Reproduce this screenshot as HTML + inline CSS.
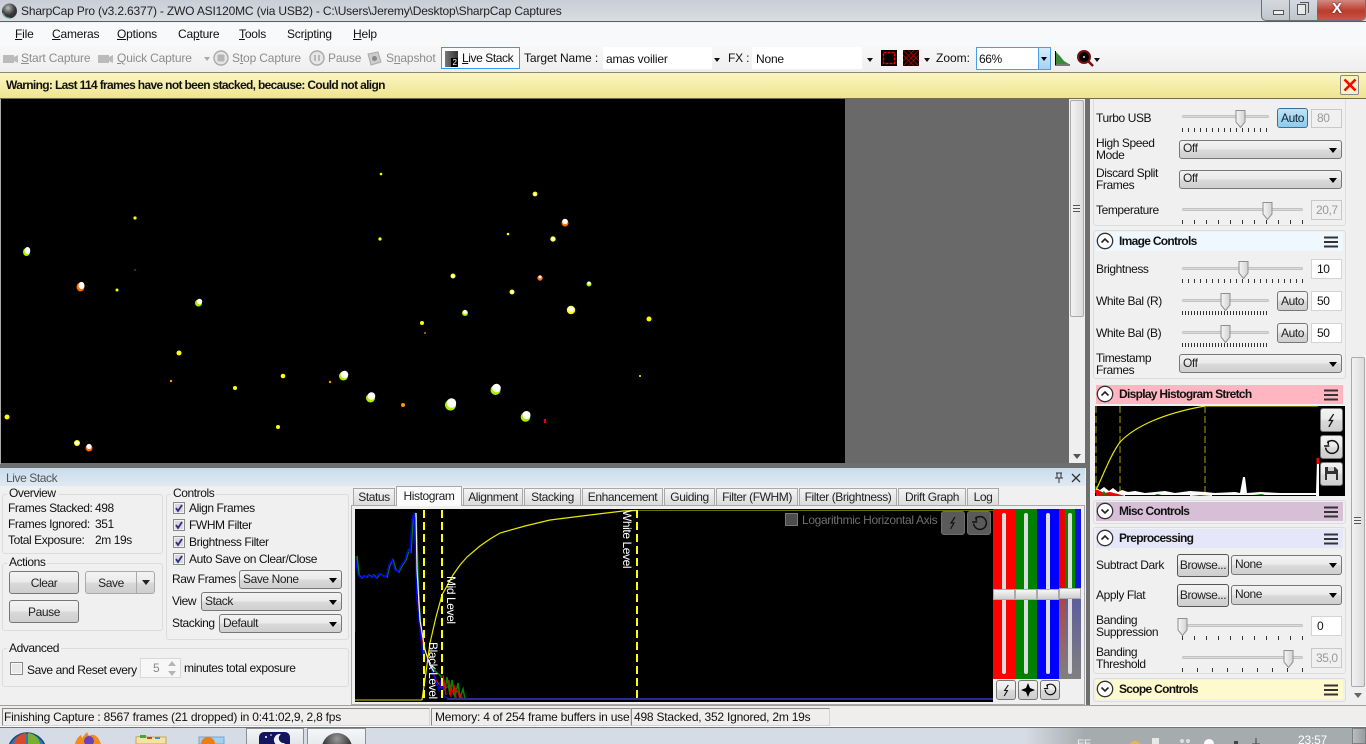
<!DOCTYPE html>
<html><head><meta charset="utf-8"><title>SharpCap Pro</title>
<style>
html,body{margin:0;padding:0;width:1366px;height:744px;overflow:hidden;background:#f0f0f0}
body{position:relative;font:12px/14px "Liberation Sans",Arial,sans-serif;color:#111;letter-spacing:-.42px}
div,span,svg{position:absolute;box-sizing:border-box}
.t{white-space:nowrap;line-height:14px}
.w{letter-spacing:-.15px}
.s{letter-spacing:-.2px}
.g{color:#8c8c8c}
u{text-decoration:underline}
.b{font-weight:bold;letter-spacing:-.7px}
.gb{border:1px solid #dcdcdc;border-radius:3px}
.btn{border:1px solid #777;border-radius:3px;background:linear-gradient(#f3f3f3 0,#ebebeb 45%,#d8d8d8 55%,#cfcfcf 100%);text-align:center;white-space:nowrap;color:#222}
.cb{border:1px solid #777;border-radius:3px;background:linear-gradient(#f3f3f3 0,#ebebeb 45%,#d9d9d9 55%,#cfcfcf 100%);white-space:nowrap;padding-left:3px;color:#222}
.cb:after{content:"";position:absolute;right:4px;top:50%;margin-top:-2px;border:4px solid transparent;border-top:5px solid #000;border-bottom:0}
.box{background:#fff;border:1px solid #d4d4d4;padding-left:5px;white-space:nowrap}
.dis{color:#999;background:#f0f0f0;border-color:#c8c8c8}
.track{height:3px;background:#d8dbd8;border:1px solid #c2c4c2;border-radius:2px}
.ticks{height:4px;background:repeating-linear-gradient(90deg,#333 0 1px,transparent 1px 6px)}
.hd{height:19px}
.chk{width:12px;height:12px;border:1px solid #8a8a8a;background:#d9d9d9;box-shadow:inset 0 0 0 1px #f2f2f2}
.tab{top:488px;height:17px;border:1px solid #a8a8a8;border-bottom:0;background:linear-gradient(#f4f4f4,#dcdcdc);text-align:center;white-space:nowrap;line-height:17px;color:#222}
</style></head><body>
<svg width="0" height="0" style="left:0;top:0"><defs>
<linearGradient id="tg" x1="0" y1="0" x2="1" y2="0"><stop offset="0" stop-color="#f6f6f6"/><stop offset="1" stop-color="#d2d2d2"/></linearGradient>
<symbol id="thumb" viewBox="0 0 11 18"><path d="M1 .5H10V12L5.500 17.500 1 12Z" fill="url(#tg)" stroke="#8f8f8f"/></symbol>
<symbol id="cc" viewBox="0 0 18 18"><circle cx="9" cy="9" r="7.700" fill="#fff" stroke="#333" stroke-width="1.300"/><path d="M5.500 10.500L9 7l3.500 3.500" fill="none" stroke="#222" stroke-width="1.600"/></symbol>
<symbol id="cd" viewBox="0 0 18 18"><circle cx="9" cy="9" r="7.700" fill="#fff" stroke="#333" stroke-width="1.300"/><path d="M5.500 7.500L9 11l3.500-3.500" fill="none" stroke="#222" stroke-width="1.600"/></symbol>
<symbol id="menu" viewBox="0 0 14 12"><path d="M0 1.500H14M0 6H14M0 10.500H14" stroke="#333" stroke-width="2"/></symbol>
<symbol id="undo" viewBox="0 0 16 16"><path d="M4 4.500A6 6 0 1 1 2.500 9" fill="none" stroke="#111" stroke-width="1.400"/><path d="M1 7.500H6M5 2.500V6.500" stroke="#111" stroke-width="1.400" fill="none"/></symbol>
<symbol id="bolt" viewBox="0 0 12 14"><path d="M8 1L4 7H7L3.500 13" fill="none" stroke="#111" stroke-width="1.200"/></symbol>
</defs></svg>

<!-- Title bar -->
<div style="left:0;top:0;width:1366px;height:22px;background:linear-gradient(#c9ced6,#d8dce3);border-bottom:1px solid #5d5f63"></div>
<svg style="left:1px;top:2px" width="17" height="18"><defs><radialGradient id="ball" cx=".4" cy=".3"><stop offset="0" stop-color="#bdbdbd"/><stop offset=".7" stop-color="#555"/><stop offset="1" stop-color="#333"/></radialGradient></defs><circle cx="8.500" cy="9" r="7.500" fill="url(#ball)"/><path d="M2 11a7 7 0 0 0 7 5" stroke="#5a9" fill="none"/></svg>
<div class="t" style="left:21px;top:4px;color:#222;letter-spacing:-.18px">SharpCap Pro (v3.2.6377) - ZWO ASI120MC (via USB2) - C:\Users\Jeremy\Desktop\SharpCap Captures</div>
<div style="left:1261px;top:0;width:105px;height:21px;border:1px solid #6b6f75;border-top:0;border-radius:0 0 5px 5px;background:linear-gradient(#d5d9df,#c0c5cc);overflow:hidden">
 <div style="left:27px;top:0;width:1px;height:20px;background:#777"></div>
 <div style="left:55px;top:0;width:48px;height:20px;background:linear-gradient(#d18a80,#bb3b2c 55%,#c9574a)"></div>
 <div style="left:11px;top:10px;width:11px;height:5px;background:#eee;border:1px solid #555"></div>
 <div style="left:35px;top:4px;width:9px;height:11px;background:#e8e8e8;border:1px solid #555"></div>
 <div style="left:38px;top:2px;width:9px;height:11px;border:1px solid #555;border-left:0;border-bottom:0"></div>
 <div class="t" style="left:70px;top:2px;font-size:15px;font-weight:bold;color:#fff;text-shadow:0 0 2px #622">X</div>
</div>

<!-- Menu -->
<div style="left:0;top:23px;width:1366px;height:23px;background:#f8f9fa"></div>
<div class="t s" style="left:15px;top:27px"><u>F</u>ile</div>
<div class="t s" style="left:52px;top:27px"><u>C</u>ameras</div>
<div class="t s" style="left:117px;top:27px"><u>O</u>ptions</div>
<div class="t s" style="left:178px;top:27px">Ca<u>p</u>ture</div>
<div class="t s" style="left:239px;top:27px"><u>T</u>ools</div>
<div class="t s" style="left:287px;top:27px">Scr<u>i</u>pting</div>
<div class="t s" style="left:353px;top:27px"><u>H</u>elp</div>

<!-- Toolbar -->
<div style="left:0;top:46px;width:1366px;height:26px;background:linear-gradient(#f8f8f8,#eeeeee)"></div>
<svg style="left:3px;top:52px" width="90" height="13"><path d="M0 3h11v8H0zM11 5l4-2v8l-4-2z" fill="#bbb"/></svg>
<div class="t g w" style="left:21px;top:51px"><u>S</u>tart Capture</div>
<svg style="left:98px;top:52px" width="16" height="13"><path d="M0 3h11v8H0zM11 5l4-2v8l-4-2z" fill="#bbb"/></svg>
<div class="t g w" style="left:117px;top:51px"><u>Q</u>uick Capture</div>
<div style="left:204px;top:57px;border:3px solid transparent;border-top:4px solid #aaa"></div>
<svg style="left:213px;top:50px" width="16" height="16"><circle cx="8" cy="8" r="7" fill="#e6e6e6" stroke="#aaa" stroke-width="1.400"/><rect x="4.500" y="4.500" width="7" height="7" rx="1" fill="#b5b5b5"/></svg>
<div class="t g w" style="left:232px;top:51px">S<u>t</u>op Capture</div>
<svg style="left:309px;top:50px" width="16" height="16"><circle cx="8" cy="8" r="7" fill="#e6e6e6" stroke="#aaa" stroke-width="1.400"/><path d="M6 5v6M10 5v6" stroke="#aaa" stroke-width="1.500"/></svg>
<div class="t g w" style="left:328px;top:51px">Pause</div>
<svg style="left:367px;top:51px" width="15" height="15"><path d="M1 3l10-2 3 10-10 3z" fill="#ccc" stroke="#aaa"/><circle cx="7.500" cy="7.500" r="2.500" fill="#888"/></svg>
<div class="t g w" style="left:386px;top:51px">S<u>n</u>apshot</div>
<div style="left:441px;top:47px;width:79px;height:22px;border:1px solid #3399ff;background:#fbfbfb"></div>
<div style="left:445px;top:51px;width:13px;height:16px;background:linear-gradient(90deg,#777,#333)"></div>
<div style="left:451px;top:58px;width:7px;height:9px;background:#000;color:#fff;font-size:8px;line-height:9px;text-align:center">2</div>
<div class="t" style="left:462px;top:51px"><u>L</u>ive Stack</div>
<div class="t" style="left:524px;top:51px;letter-spacing:-.1px">Target Name :</div>
<div style="left:603px;top:47px;width:109px;height:22px;background:#fff"></div>
<div class="t s" style="left:606px;top:52px">amas voilier</div>
<div style="left:714px;top:58px;border:3px solid transparent;border-top:4px solid #111"></div>
<div class="t s" style="left:728px;top:51px">FX :</div>
<div style="left:752px;top:47px;width:110px;height:22px;background:#fff"></div>
<div class="t s" style="left:756px;top:52px">None</div>
<div style="left:867px;top:58px;border:3px solid transparent;border-top:4px solid #111"></div>
<svg style="left:881px;top:50px" width="16" height="16"><rect width="16" height="16"/><rect x="2.500" y="2.500" width="11" height="11" fill="none" stroke="#e00" stroke-width="1.500" stroke-dasharray="3 1"/></svg>
<svg style="left:903px;top:50px" width="16" height="16"><rect width="16" height="16"/><path d="M0 0L16 16M16 0L0 16M5 0L16 11M11 0L0 11M0 5L11 16M16 5L5 16" stroke="#900" fill="none"/></svg>
<div style="left:924px;top:58px;border:3px solid transparent;border-top:4px solid #111"></div>
<div class="t" style="left:936px;top:51px;letter-spacing:0">Zoom:</div>
<div style="left:976px;top:47px;width:75px;height:23px;border:1px solid #4a9de8;background:#fff"></div>
<div class="t" style="left:979px;top:52px">66%</div>
<div style="left:1038px;top:48px;width:12px;height:21px;background:linear-gradient(#d7ecfb,#a5d2f2);border-left:1px solid #4a9de8"></div>
<div style="left:1041px;top:57px;border:3px solid transparent;border-top:4px solid #000"></div>
<svg style="left:1055px;top:50px" width="16" height="16"><path d="M1 14V2L5 6 9 11 14 14Z" fill="#3b8a3b"/><path d="M.500 1V15H15" stroke="#000" fill="none"/></svg>
<svg style="left:1077px;top:50px" width="17" height="17"><circle cx="7" cy="7" r="6" fill="#000" stroke="#7d0f10" stroke-width="2"/><circle cx="7" cy="7" r="1" fill="#ddd"/><path d="M11 11l5 5" stroke="#7d0f10" stroke-width="2.500"/></svg>
<div style="left:1094px;top:58px;border:3px solid transparent;border-top:4px solid #111"></div>

<!-- Warning -->
<div style="left:0;top:72px;width:1366px;height:27px;background:linear-gradient(#faf5c2,#efe58f);border-top:1px solid #8a8a70;border-bottom:1px solid #6e6e55"></div>
<div class="t" style="left:6px;top:78px;font-weight:bold;letter-spacing:-.66px;color:#111">Warning: Last 114 frames have not been stacked, because: Could not align</div>
<div style="left:1340px;top:75px;width:19px;height:20px;border:1px solid #888;border-radius:2px;background:#f7f2c4"></div>
<svg style="left:1343px;top:78px" width="14" height="14"><path d="M1.500 1.500L12.500 12.500M12.500 1.500L1.500 12.500" stroke="#f00" stroke-width="2.600"/></svg>

<!-- Image area -->
<div style="left:0;top:99px;width:1069px;height:365px;background:#696969"></div>
<svg style="left:1px;top:99px;background:#000" width="844" height="364" viewBox="1 99 844 364">
<g fill="#a8f000"><ellipse cx="26.500" cy="252" rx="3.500" ry="4"/><ellipse cx="198.500" cy="303" rx="3.500" ry="3.500"/><circle cx="343.500" cy="376" r="4.500"/><circle cx="370.500" cy="398" r="4.500"/><circle cx="450.500" cy="405" r="5.500"/><circle cx="495.500" cy="390" r="5"/><circle cx="525.500" cy="417" r="4.800"/><circle cx="465" cy="313" r="3"/><circle cx="589" cy="284" r="2.500"/></g>
<g fill="#ff6a00"><ellipse cx="80.500" cy="287" rx="4" ry="4.500"/><circle cx="89" cy="448" r="3.500"/><circle cx="565" cy="223" r="3.500"/><circle cx="540" cy="278" r="2.700"/></g>
<g fill="#ff0"><circle cx="7" cy="417" r="2.500"/><circle cx="77" cy="443" r="3"/><circle cx="179" cy="353" r="2.500"/><circle cx="283" cy="376" r="2.300"/><circle cx="235" cy="388" r="2"/><circle cx="278" cy="427" r="2"/><circle cx="553" cy="239" r="2.700"/><circle cx="535" cy="194" r="2.400"/><circle cx="453" cy="276" r="2.500"/><circle cx="512" cy="292" r="2.500"/><circle cx="571" cy="310" r="4.200"/><circle cx="649" cy="319" r="2.500"/><circle cx="117" cy="290" r="1.500"/><circle cx="508" cy="234" r="1.300"/><circle cx="135" cy="218" r="1.600"/><circle cx="381" cy="174" r="1.300"/><circle cx="380" cy="239" r="1.600"/><circle cx="422" cy="323" r="2"/><circle cx="640" cy="376" r="1"/></g>
<g fill="#fff"><ellipse cx="27.500" cy="250.500" rx="2.800" ry="3.500"/><ellipse cx="81.500" cy="285.500" rx="3" ry="3.600"/><circle cx="199.500" cy="301.500" r="2.700"/><circle cx="344.500" cy="374.500" r="3.800"/><circle cx="371.500" cy="396" r="3.800"/><circle cx="451.500" cy="403" r="4.700"/><circle cx="496.500" cy="388" r="4.300"/><circle cx="526.500" cy="415" r="4"/><circle cx="89" cy="446.500" r="2.600"/><circle cx="77" cy="443" r="1.900"/><circle cx="565" cy="221.500" r="2.800"/><circle cx="465" cy="312" r="2.100"/><circle cx="589" cy="283" r="1.500"/><circle cx="453" cy="276" r="1.500"/><circle cx="512" cy="292" r="1.500"/><circle cx="553" cy="239" r="1.700"/><circle cx="535" cy="194" r="1.300"/><circle cx="540" cy="277" r="1.500"/><circle cx="571" cy="309" r="2.800"/></g>
<g fill="#f90"><circle cx="171" cy="381" r="1.200"/><circle cx="330" cy="382" r="1.200"/><circle cx="403" cy="405" r="2"/><circle cx="425" cy="333" r=".9"/><circle cx="135" cy="270" r=".6"/></g>
<rect x="544" y="419" width="2" height="4" fill="#e00"/>
</svg>
<div style="left:1069px;top:99px;width:16px;height:365px;background:#efefef"></div>
<div style="left:1070px;top:100px;width:14px;height:217px;background:linear-gradient(90deg,#f2f2f2,#dcdcdc);border:1px solid #aaa;border-radius:2px"></div>
<div style="left:1073px;top:205px;width:7px;height:7px;background:repeating-linear-gradient(#555 0 1px,#eee 1px 3px)"></div>
<div style="left:1073px;top:454px;border:4px solid transparent;border-top:5px solid #555"></div>
<div style="left:0;top:463px;width:1086px;height:5px;background:#6e6e6e"></div>
<div style="left:1085px;top:99px;width:5px;height:608px;background:#6e6e6e"></div>
<div style="left:0;top:99px;width:1px;height:365px;background:#aaa"></div>

<!-- Live stack panel -->
<div style="left:0;top:468px;width:1086px;height:238px;background:#f0f0f0"></div>
<div style="left:0;top:468px;width:1085px;height:18px;background:linear-gradient(#c9dcec,#dfe9f3)"></div>
<div class="t" style="left:6px;top:471px;color:#555">Live Stack</div>
<svg style="left:1054px;top:472px" width="10" height="11"><path d="M2 1h6M3 1v5h4V1M1 6h8M5 6v5" stroke="#333" fill="none"/></svg>
<svg style="left:1071px;top:473px" width="10" height="10"><path d="M1 1l8 8M9 1L1 9" stroke="#333" stroke-width="1.300"/></svg>

<div class="gb" style="left:2px;top:494px;width:161px;height:60px"></div>
<div class="t" style="left:7px;top:486px;background:#f0f0f0;padding:0 2px">Overview</div>
<div class="t" style="left:8px;top:501px">Frames Stacked:</div><div class="t" style="left:95px;top:501px">498</div>
<div class="t" style="left:8px;top:517px">Frames Ignored:</div><div class="t" style="left:95px;top:517px">351</div>
<div class="t" style="left:8px;top:533px">Total Exposure:</div><div class="t" style="left:95px;top:533px">2m 19s</div>

<div class="gb" style="left:2px;top:563px;width:161px;height:68px"></div>
<div class="t" style="left:7px;top:555px;background:#f0f0f0;padding:0 2px">Actions</div>
<div class="btn" style="left:9px;top:571px;width:70px;height:23px;line-height:22px">Clear</div>
<div class="btn" style="left:85px;top:571px;width:70px;height:23px;line-height:22px;border-color:#aaa;padding-right:18px">Save</div>
<div style="left:136px;top:572px;width:1px;height:21px;background:#aaa"></div>
<div style="left:142px;top:580px;border:4px solid transparent;border-top:5px solid #222;border-bottom:0"></div>
<div class="btn" style="left:9px;top:600px;width:70px;height:23px;line-height:22px">Pause</div>

<div class="gb" style="left:166px;top:494px;width:183px;height:146px"></div>
<div class="t" style="left:171px;top:486px;background:#f0f0f0;padding:0 2px">Controls</div>
<div class="chk" style="left:173px;top:502px"></div><div class="chk" style="left:173px;top:519px"></div><div class="chk" style="left:173px;top:536px"></div><div class="chk" style="left:173px;top:553px"></div>
<svg style="left:173px;top:502px" width="12" height="63"><g fill="none" stroke="#2d2d8c" stroke-width="1.800"><path d="M3 6l2 3 4-6"/><path d="M3 23l2 3 4-6"/><path d="M3 40l2 3 4-6"/><path d="M3 57l2 3 4-6"/></g></svg>
<div class="t" style="left:189px;top:501px">Align Frames</div>
<div class="t" style="left:189px;top:518px">FWHM Filter</div>
<div class="t" style="left:189px;top:535px">Brightness Filter</div>
<div class="t" style="left:189px;top:552px">Auto Save on Clear/Close</div>
<div class="t" style="left:172px;top:572px">Raw Frames</div>
<div class="cb" style="left:239px;top:570px;width:103px;height:19px;line-height:17px">Save None</div>
<div class="t" style="left:172px;top:594px">View</div>
<div class="cb" style="left:201px;top:592px;width:141px;height:19px;line-height:17px">Stack</div>
<div class="t" style="left:172px;top:616px">Stacking</div>
<div class="cb" style="left:219px;top:614px;width:123px;height:19px;line-height:17px">Default</div>

<div class="gb" style="left:2px;top:648px;width:347px;height:39px"></div>
<div class="t" style="left:7px;top:641px;background:#f0f0f0;padding:0 2px">Advanced</div>
<div style="left:10px;top:662px;width:13px;height:13px;border:1px solid #8a8a8a;background:#e8e8e8;box-shadow:inset 0 0 0 1px #f8f8f8"></div>
<div class="t" style="left:27px;top:663px">Save and Reset every</div>
<div style="left:140px;top:658px;width:41px;height:20px;background:#f7f7f7;border:1px solid #d8d8d8"></div>
<div class="t" style="left:153px;top:661px;color:#888">5</div>
<div style="left:168px;top:661px;border:4px solid transparent;border-bottom:5px solid #b5b5b5;border-top:0"></div>
<div style="left:168px;top:671px;border:4px solid transparent;border-top:5px solid #b5b5b5;border-bottom:0"></div>
<div class="t" style="left:184px;top:661px">minutes total exposure</div>

<!-- Tabs -->
<div style="left:351px;top:505px;width:734px;height:200px;border:1px solid #a8a8a8;background:#f0f0f0"></div>
<div class="tab" style="left:353px;width:42px">Status</div>
<div class="tab" style="left:463px;width:60px">Alignment</div>
<div class="tab" style="left:524px;width:57px">Stacking</div>
<div class="tab" style="left:582px;width:81px">Enhancement</div>
<div class="tab" style="left:664px;width:51px">Guiding</div>
<div class="tab" style="left:716px;width:82px">Filter (FWHM)</div>
<div class="tab" style="left:799px;width:98px">Filter (Brightness)</div>
<div class="tab" style="left:898px;width:68px">Drift Graph</div>
<div class="tab" style="left:967px;width:32px">Log</div>
<div class="tab" style="left:396px;top:486px;width:66px;height:20px;background:#fbfbfb;border-bottom:0;line-height:19px;z-index:2">Histogram</div>

<!-- Histogram -->
<svg style="left:355px;top:509px;background:#000" width="638" height="193" viewBox="355 509 638 193">
<path d="M355 700H422" stroke="#8f8f00" stroke-width="1.500" fill="none"/>
<path d="M637 510.500H993" stroke="#6e6e00" fill="none"/>
<path d="M356 556L358 575 361 578 363 576 366 577 368 575 371 577 373 575 376 578 379 574 383 576 386 577 389 565 392 560 395 570 398 572 401 566 405 560 408 550 410 552 412 520 415 513 416 540 418 600 420 630 423 655" stroke="#080" stroke-width="1.500" fill="none" transform="translate(1,0)"/>
<path d="M418 600L422 640 430 665 436 680 443 690 450 685 454 695 456 699" stroke="#e00" stroke-width="1.200" fill="none"/>
<path d="M430 665L436 672 441 676 445 690 447 677 450 695 452 680 455 697 458 683 460 698 463 689 465 699" stroke="#080" stroke-width="1.500" fill="none"/>
<path d="M443 675L446 695M449 680L451 697M454 685L456 698M458 692L460 699M455 688L463 699" stroke="#e00" stroke-width="1.300"/>
<path d="M355 632V556L358 575 361 578 363 576 366 577 368 575 371 577 373 575 376 578 379 574 383 576 386 577 389 565 392 560 395 570 398 572 401 566 405 560 408 550 410 552 412 520 414 513 415 540 417 600 420 630 423 655 428 660 431 668 436 682 439 690 441 680 444 697 448 698" stroke="#0000f0" stroke-width="1.500" fill="none"/>
<path d="M416 513L417 570 420 620 425 650 430 665 434 672" stroke="#eee" stroke-width="1.200" fill="none"/>
<path d="M447 699H993" stroke="#2b2b8f" stroke-width="2"/>
<path d="M422 700L426 672 430 643 436 617 442 595 453 575 460 565 467 557 480 546 490 539 500 533 525 526 550 520 590 515 623 511 637 510.500" stroke="#e8e800" stroke-width="1.200" fill="none"/>
<g stroke="#ff0" stroke-width="2" stroke-dasharray="8 4"><path d="M424 510V700"/><path d="M442 510V700"/><path d="M637 510V700"/></g>
</svg>
<div class="t" style="left:444px;top:576px;writing-mode:vertical-rl;color:#fff;line-height:14px">Mid Level</div>
<div class="t" style="left:426px;top:642px;writing-mode:vertical-rl;color:#fff;line-height:14px">Black Level</div>
<div class="t" style="left:620px;top:510px;writing-mode:vertical-rl;color:#fff;line-height:14px">White Level</div>
<div style="left:785px;top:513px;width:13px;height:13px;background:#4c4c4c;border:1px solid #777"></div>
<div class="t" style="left:802px;top:513px;color:#6e6e6e;letter-spacing:-.35px">Logarithmic Horizontal Axis</div>
<div style="left:941px;top:511px;width:24px;height:24px;background:#5a5a5a;border:1px solid #6d6d6d;border-radius:3px"></div>
<svg style="left:947px;top:516px" width="12" height="14"><use href="#bolt"/></svg>
<div style="left:967px;top:511px;width:24px;height:24px;background:#5a5a5a;border:1px solid #6d6d6d;border-radius:3px"></div>
<svg style="left:971px;top:514px" width="17" height="17"><use href="#undo"/></svg>

<!-- Colour sliders -->
<div style="left:993px;top:509px;width:22px;height:170px;background:#f00"></div>
<div style="left:1015px;top:509px;width:22px;height:170px;background:#008000"></div>
<div style="left:1037px;top:509px;width:22px;height:170px;background:#00f"></div>
<div style="left:1059px;top:509px;width:22px;height:81px;background:linear-gradient(90deg,#e00 0 6px,#080 6px 16px,#11d 16px)"></div>
<div style="left:1059px;top:590px;width:22px;height:89px;background:linear-gradient(#5a5aa0,#808080)"></div>
<div style="left:1059px;top:590px;width:6px;height:89px;background:linear-gradient(#b04040,#808080)"></div>
<div style="left:1002px;top:513px;width:4px;height:161px;background:#ddd;border-radius:2px"></div>
<div style="left:1024px;top:513px;width:4px;height:161px;background:#ddd;border-radius:2px"></div>
<div style="left:1046px;top:513px;width:4px;height:161px;background:#ddd;border-radius:2px"></div>
<div style="left:1068px;top:513px;width:4px;height:161px;background:#ddd;border-radius:2px"></div>
<div style="left:993px;top:589px;width:22px;height:11px;background:linear-gradient(#f7f7f7,#cfcfcf);border:1px solid #aaa"></div>
<div style="left:1015px;top:589px;width:22px;height:11px;background:linear-gradient(#f7f7f7,#cfcfcf);border:1px solid #aaa"></div>
<div style="left:1037px;top:589px;width:22px;height:11px;background:linear-gradient(#f7f7f7,#cfcfcf);border:1px solid #aaa"></div>
<div style="left:1059px;top:588px;width:22px;height:11px;background:linear-gradient(#f7f7f7,#cfcfcf);border:1px solid #aaa"></div>
<div class="btn" style="left:996px;top:680px;width:20px;height:20px"></div>
<svg style="left:1001px;top:684px" width="11" height="13"><use href="#bolt"/></svg>
<div class="btn" style="left:1018px;top:680px;width:20px;height:20px"></div>
<svg style="left:1021px;top:683px" width="14" height="14"><path d="M7 0L9 5 14 7 9 9 7 14 5 9 0 7 5 5Z"/></svg>
<div class="btn" style="left:1040px;top:680px;width:20px;height:20px"></div>
<svg style="left:1043px;top:682px" width="14" height="14"><use href="#undo"/></svg>

<!-- Right panel -->
<div style="left:1090px;top:99px;width:260px;height:606px;background:#f0f0f0"></div>
<div class="gb" style="left:1093px;top:99px;width:253px;height:127px;border-radius:0 0 3px 3px;border-top:0"></div>
<div class="t" style="left:1096px;top:111px">Turbo USB</div>
<div class="track" style="left:1182px;top:115px;width:87px"></div>
<svg style="left:1235px;top:110px" width="11" height="18"><use href="#thumb"/></svg>
<div class="ticks" style="left:1182px;top:128px;width:87px"></div>
<div style="left:1277px;top:108px;width:31px;height:20px;border:1px solid #3c6f92;border-radius:3px;background:linear-gradient(#bfe3f7,#8ccbee);text-align:center;line-height:18px;color:#123">Auto</div>
<div class="box dis" style="left:1311px;top:109px;width:31px;height:19px;line-height:17px">80</div>
<div class="t" style="left:1096px;top:137px;line-height:12px;white-space:normal;width:70px">High Speed Mode</div>
<div class="cb" style="left:1179px;top:140px;width:163px;height:19px;line-height:15px">Off</div>
<div class="t" style="left:1096px;top:167px;line-height:12px;white-space:normal;width:70px">Discard Split Frames</div>
<div class="cb" style="left:1179px;top:170px;width:163px;height:19px;line-height:15px">Off</div>
<div class="t" style="left:1096px;top:203px">Temperature</div>
<div class="track" style="left:1182px;top:208px;width:121px"></div>
<svg style="left:1262px;top:202px" width="11" height="18"><use href="#thumb"/></svg>
<div class="ticks" style="left:1182px;top:220px;width:121px;background:repeating-linear-gradient(90deg,#333 0 1px,transparent 1px 12px)"></div>
<div class="box dis" style="left:1311px;top:200px;width:31px;height:20px;line-height:18px;padding-left:4px">20,7</div>

<div class="gb" style="left:1093px;top:230px;width:253px;height:149px"></div>
<div class="hd" style="left:1096px;top:232px;width:247px;background:#f0f8ff"></div>
<svg style="left:1096px;top:232px" width="18" height="18"><use href="#cc"/></svg>
<div class="t b" style="left:1119px;top:234px">Image Controls</div>
<svg style="left:1324px;top:236px" width="14" height="12"><use href="#menu"/></svg>
<div class="t" style="left:1096px;top:262px">Brightness</div>
<div class="track" style="left:1182px;top:267px;width:121px"></div>
<svg style="left:1238px;top:261px" width="11" height="18"><use href="#thumb"/></svg>
<div class="ticks" style="left:1182px;top:279px;width:121px"></div>
<div class="box" style="left:1311px;top:259px;width:31px;height:20px;line-height:18px">10</div>
<div class="t" style="left:1096px;top:294px">White Bal (R)</div>
<div class="track" style="left:1182px;top:299px;width:87px"></div>
<svg style="left:1220px;top:293px" width="11" height="18"><use href="#thumb"/></svg>
<div class="ticks" style="left:1182px;top:311px;width:87px;background:repeating-linear-gradient(90deg,#333 0 1px,transparent 1px 3px)"></div>
<div class="btn" style="left:1277px;top:291px;width:31px;height:20px;line-height:18px">Auto</div>
<div class="box" style="left:1311px;top:291px;width:31px;height:20px;line-height:18px">50</div>
<div class="t" style="left:1096px;top:326px">White Bal (B)</div>
<div class="track" style="left:1182px;top:331px;width:87px"></div>
<svg style="left:1220px;top:325px" width="11" height="18"><use href="#thumb"/></svg>
<div class="ticks" style="left:1182px;top:343px;width:87px;background:repeating-linear-gradient(90deg,#333 0 1px,transparent 1px 3px)"></div>
<div class="btn" style="left:1277px;top:323px;width:31px;height:20px;line-height:18px">Auto</div>
<div class="box" style="left:1311px;top:323px;width:31px;height:20px;line-height:18px">50</div>
<div class="t" style="left:1096px;top:352px;line-height:12px;white-space:normal;width:70px">Timestamp Frames</div>
<div class="cb" style="left:1179px;top:354px;width:163px;height:19px;line-height:16px">Off</div>

<div class="hd" style="left:1096px;top:385px;width:247px;background:#ffb6c1"></div>
<svg style="left:1096px;top:385px" width="18" height="18"><use href="#cc"/></svg>
<div class="t b" style="left:1119px;top:387px">Display Histogram Stretch</div>
<svg style="left:1324px;top:389px" width="14" height="12"><use href="#menu"/></svg>
<svg style="left:1095px;top:406px;background:#000" width="250" height="90" viewBox="1095 406 250 90">
<g stroke="#6e6e00" stroke-width="1.500" stroke-dasharray="7 3" fill="none"><path d="M1096 406V496"/><path d="M1120 406V496"/><path d="M1205 406V496"/></g>
<path d="M1205 406.500H1318" stroke="#6e6e00"/>
<path d="M1096 494V488L1100 490 1104 487 1109 491 1113 488 1118 492 1122 490 1128 492 1135 491 1145 493 1155 492 1165 491 1175 493 1190 491 1205 492 1215 493 1235 492 1240 493 1243 477 1245 477 1247 493 1260 492 1280 493 1316 493 1317 460 1319 460 1319 496 1096 496Z" fill="#fff"/>
<path d="M1096 496V489L1100 491 1104 493 1110 492 1118 494 1125 496ZM1130 496L1140 495 1150 496ZM1190 496L1200 495 1212 496Z" fill="#e00"/>
<path d="M1101 494L1104 491 1107 495ZM1150 496L1158 494 1165 496ZM1245 496L1262 494 1268 496Z" fill="#080"/>
<path d="M1125 496H1190M1212 496H1316" stroke="#000" stroke-width="2"/>
<rect x="1316.500" y="458" width="2.500" height="6" fill="#f00"/>
<path d="M1096 490C1102 478 1110 456 1120 442 1135 426 1165 413 1205 406" stroke="#e8e800" stroke-width="1.200" fill="none"/>
</svg>
<div class="btn" style="left:1320px;top:408px;width:23px;height:24px"></div>
<svg style="left:1325px;top:413px" width="13" height="15"><use href="#bolt"/></svg>
<div class="btn" style="left:1320px;top:435px;width:23px;height:24px"></div>
<svg style="left:1323px;top:438px" width="17" height="17"><use href="#undo"/></svg>
<div class="btn" style="left:1320px;top:462px;width:23px;height:24px"></div>
<svg style="left:1325px;top:467px" width="13" height="13"><path d="M0 0H10L13 3V13H0Z" fill="#333"/><rect x="3" y="0" width="6" height="4" fill="#ccc"/><rect x="2" y="7" width="9" height="6" fill="#ddd"/></svg>

<div class="gb" style="left:1093px;top:500px;width:253px;height:24px"></div>
<div class="hd" style="left:1096px;top:502px;width:247px;background:#d8bfd8"></div>
<svg style="left:1096px;top:502px" width="18" height="18"><use href="#cd"/></svg>
<div class="t b" style="left:1119px;top:504px">Misc Controls</div>
<svg style="left:1324px;top:506px" width="14" height="12"><use href="#menu"/></svg>

<div class="gb" style="left:1093px;top:527px;width:253px;height:147px"></div>
<div class="hd" style="left:1096px;top:529px;width:247px;background:#e6e6fa"></div>
<svg style="left:1096px;top:529px" width="18" height="18"><use href="#cc"/></svg>
<div class="t b" style="left:1119px;top:531px">Preprocessing</div>
<svg style="left:1324px;top:533px" width="14" height="12"><use href="#menu"/></svg>
<div class="t" style="left:1096px;top:558px">Subtract Dark</div>
<div class="btn" style="left:1177px;top:554px;width:52px;height:23px;line-height:21px;border-color:#555;overflow:hidden">Browse...</div>
<div class="cb" style="left:1231px;top:555px;width:111px;height:20px;line-height:16px">None</div>
<div class="t" style="left:1096px;top:588px">Apply Flat</div>
<div class="btn" style="left:1177px;top:584px;width:52px;height:23px;line-height:21px;border-color:#555;overflow:hidden">Browse...</div>
<div class="cb" style="left:1231px;top:585px;width:111px;height:20px;line-height:16px">None</div>
<div class="t" style="left:1096px;top:614px;line-height:12px;white-space:normal;width:70px">Banding Suppression</div>
<div class="track" style="left:1182px;top:624px;width:121px"></div>
<svg style="left:1177px;top:618px" width="11" height="18"><use href="#thumb"/></svg>
<div class="ticks" style="left:1182px;top:636px;width:121px;background:repeating-linear-gradient(90deg,#333 0 1px,transparent 1px 12px)"></div>
<div class="box" style="left:1311px;top:616px;width:31px;height:20px;line-height:18px">0</div>
<div class="t" style="left:1096px;top:646px;line-height:12px;white-space:normal;width:70px">Banding Threshold</div>
<div class="track" style="left:1182px;top:656px;width:121px"></div>
<svg style="left:1283px;top:650px" width="11" height="18"><use href="#thumb"/></svg>
<div class="ticks" style="left:1182px;top:668px;width:121px;background:repeating-linear-gradient(90deg,#333 0 1px,transparent 1px 15px)"></div>
<div class="box dis" style="left:1311px;top:648px;width:31px;height:20px;line-height:18px;padding-left:4px">35,0</div>

<div class="gb" style="left:1093px;top:678px;width:253px;height:24px"></div>
<div class="hd" style="left:1096px;top:680px;width:247px;background:#fffacd"></div>
<svg style="left:1096px;top:680px" width="18" height="18"><use href="#cd"/></svg>
<div class="t b" style="left:1119px;top:682px">Scope Controls</div>
<svg style="left:1324px;top:684px" width="14" height="12"><use href="#menu"/></svg>

<!-- Right scrollbar -->
<div style="left:1350px;top:99px;width:16px;height:606px;background:#efefef"></div>
<div style="left:1351px;top:357px;width:14px;height:330px;background:linear-gradient(90deg,#f2f2f2,#dcdcdc);border:1px solid #aaa;border-radius:2px"></div>
<div style="left:1354px;top:517px;width:7px;height:7px;background:repeating-linear-gradient(#555 0 1px,#eee 1px 3px)"></div>
<div style="left:1354px;top:693px;border:4px solid transparent;border-top:5px solid #666"></div>

<!-- Status bar -->
<div style="left:0;top:705px;width:1366px;height:22px;background:#f0eded;border-top:1px solid #a0a0a0;border-bottom:1px solid #fff"></div>
<div style="left:2px;top:708px;width:428px;height:18px;border:1px solid #d8d4d4;border-left-color:#888;border-top-color:#888"></div>
<div class="t" style="left:4px;top:710px;letter-spacing:-.22px">Finishing Capture : 8567 frames (21 dropped) in 0:41:02,9, 2,8 fps</div>
<div style="left:431px;top:708px;width:200px;height:18px;border:1px solid #d8d4d4;border-left-color:#888;border-top-color:#888;overflow:hidden"><div class="t" style="left:3px;top:1px;letter-spacing:-.22px">Memory: 4 of 254 frame buffers in use</div></div>
<div style="left:631px;top:708px;width:199px;height:18px;border:1px solid #d8d4d4;border-left-color:#888;border-top-color:#888"></div>
<div class="t" style="left:634px;top:710px;letter-spacing:-.22px">498 Stacked, 352 Ignored, 2m 19s</div>

<!-- Taskbar -->
<div style="left:0;top:727px;width:1366px;height:17px;background:linear-gradient(90deg,#d6dce5 0,#d6dce5 1025px,#a6abad 1085px,#a6abad 100%);border-top:1px solid #6d7278"></div>
<svg style="left:0;top:728px" width="440" height="16" viewBox="0 728 440 16">
<circle cx="27" cy="752" r="19" fill="#2a78b8" stroke="#184a72" stroke-width="1.500"/>
<path d="M14 744a13 13 0 0 1 12-11v11z" fill="#d94a2a"/><path d="M28 733a13 13 0 0 1 12 11H28z" fill="#7ab030"/>
<path d="M75 744c1-5 4-8 6-9l1 3 5-6 2 4c4-3 9-1 12 8z" fill="#f28a1e"/><circle cx="89" cy="741" r="5" fill="#6a3fb8"/>
<path d="M136 744V737l8-1 3 1h19v7z" fill="#f3e2a0" stroke="#c2a860"/><rect x="140" y="735" width="6" height="3" fill="#4aa04a"/><rect x="147" y="737" width="5" height="2" fill="#c8432e"/><rect x="155" y="737" width="5" height="2" fill="#3a8fd8"/>
<rect x="199" y="737" width="25" height="7" fill="#a4cfee" stroke="#7aa6c6"/><circle cx="208" cy="744" r="7" fill="#f07d14"/>
</svg>
<div style="left:246px;top:728px;width:58px;height:16px;background:linear-gradient(#f4f6f8,#e2e6ea);border:1px solid #8a8f96;border-bottom:0"></div>
<div style="left:259px;top:732px;width:31px;height:12px;background:#15155e;border-radius:5px 5px 0 0"></div>
<svg style="left:259px;top:732px" width="31" height="12"><path d="M22 2a6 6 0 1 0 4 9 5 5 0 0 1-4-9z" fill="#f2f2ff"/><circle cx="7" cy="5" r="1" fill="#fff"/><circle cx="12" cy="3" r=".8" fill="#fff"/></svg>
<div style="left:307px;top:728px;width:59px;height:16px;background:linear-gradient(#f4f6f8,#e8ebee);border:1px solid #8a8f96;border-bottom:0"></div>
<svg style="left:320px;top:732px" width="34" height="12"><defs><radialGradient id="b2" cx=".5" cy=".2"><stop offset="0" stop-color="#999"/><stop offset="1" stop-color="#333"/></radialGradient></defs><circle cx="17" cy="16" r="15" fill="url(#b2)"/></svg>
<div class="t" style="left:1077px;top:737px;color:#eee;font-size:11px">EE</div>
<svg style="left:1128px;top:738px" width="160" height="6"><circle cx="7" cy="9" r="6" fill="#e8b84a"/><rect x="24" y="0" width="7" height="6" fill="#e8e8e8"/><circle cx="54" cy="3" r="2" fill="#ddd"/><circle cx="60" cy="3" r="2" fill="#ddd"/><circle cx="81" cy="6" r="5" fill="#fff"/><rect x="106" y="3" width="4" height="3" fill="#444"/><path d="M128 0v6M124 6h8" stroke="#444"/></svg>
<div class="t" style="left:1298px;top:733px;color:#fff;letter-spacing:-.2px">23:57</div>
<div style="left:1352px;top:728px;width:14px;height:16px;background:linear-gradient(90deg,#b9bdbf,#989c9e);border:1px solid #7c8083"></div>
</body></html>
